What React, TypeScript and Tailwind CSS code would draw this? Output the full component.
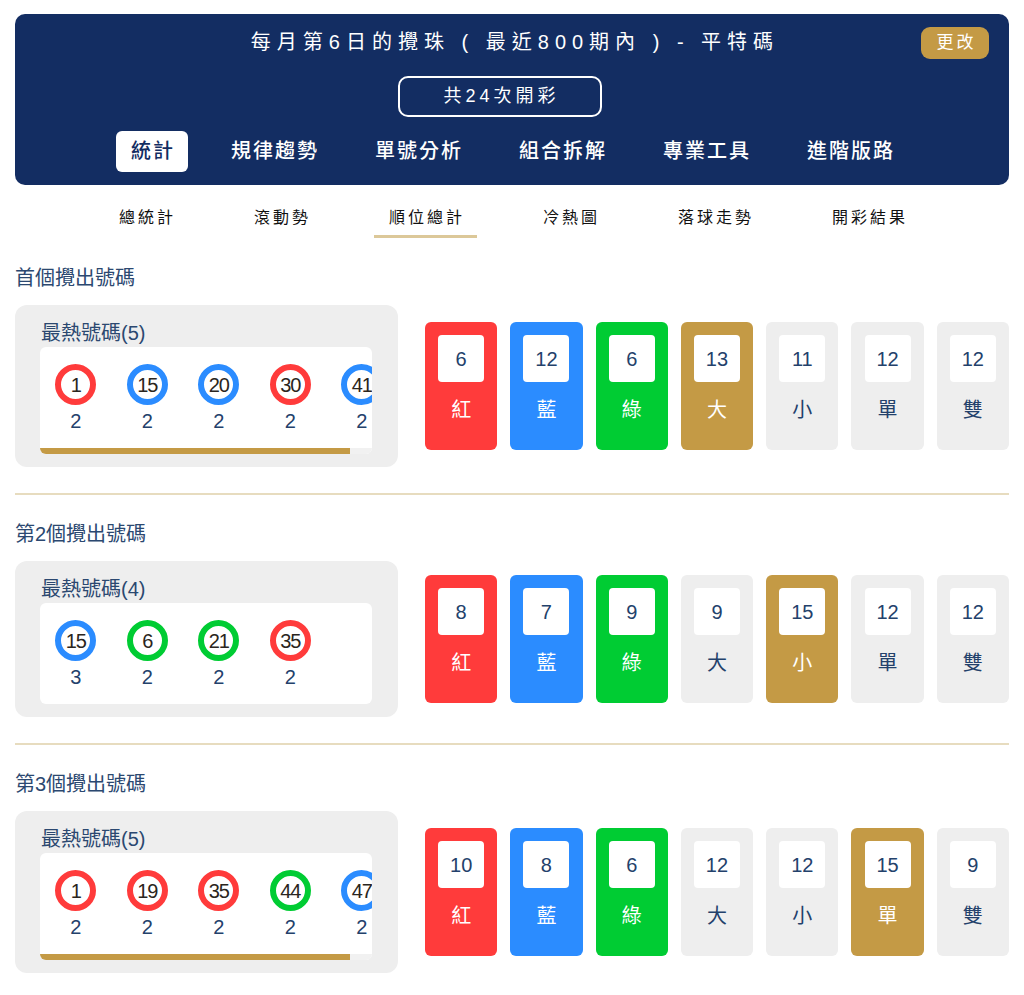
import React from "react";

type Ball = { n: number; c: "r" | "b" | "g"; k: number };
type Card = { v: number; label: string; t: "r" | "b" | "g" | "y" | "x" };

const ringCls: Record<string, string> = {
  r: "border-[#ff3b3b]",
  b: "border-[#2b8cff]",
  g: "border-[#00cc33]",
};
const cardCls: Record<string, string> = {
  r: "bg-[#ff3b3b] text-white",
  b: "bg-[#2b8cff] text-white",
  g: "bg-[#00cc33] text-white",
  y: "bg-[#c49a45] text-white",
  x: "bg-[#eeeeee] text-[#23416b]",
};

const sections: {
  title: string;
  hot: number;
  balls: Ball[];
  scroll: boolean;
  cards: Card[];
}[] = [
  {
    title: "首個攪出號碼",
    hot: 5,
    scroll: true,
    balls: [
      { n: 1, c: "r", k: 2 },
      { n: 15, c: "b", k: 2 },
      { n: 20, c: "b", k: 2 },
      { n: 30, c: "r", k: 2 },
      { n: 41, c: "b", k: 2 },
    ],
    cards: [
      { v: 6, label: "紅", t: "r" },
      { v: 12, label: "藍", t: "b" },
      { v: 6, label: "綠", t: "g" },
      { v: 13, label: "大", t: "y" },
      { v: 11, label: "小", t: "x" },
      { v: 12, label: "單", t: "x" },
      { v: 12, label: "雙", t: "x" },
    ],
  },
  {
    title: "第2個攪出號碼",
    hot: 4,
    scroll: false,
    balls: [
      { n: 15, c: "b", k: 3 },
      { n: 6, c: "g", k: 2 },
      { n: 21, c: "g", k: 2 },
      { n: 35, c: "r", k: 2 },
    ],
    cards: [
      { v: 8, label: "紅", t: "r" },
      { v: 7, label: "藍", t: "b" },
      { v: 9, label: "綠", t: "g" },
      { v: 9, label: "大", t: "x" },
      { v: 15, label: "小", t: "y" },
      { v: 12, label: "單", t: "x" },
      { v: 12, label: "雙", t: "x" },
    ],
  },
  {
    title: "第3個攪出號碼",
    hot: 5,
    scroll: true,
    balls: [
      { n: 1, c: "r", k: 2 },
      { n: 19, c: "r", k: 2 },
      { n: 35, c: "r", k: 2 },
      { n: 44, c: "g", k: 2 },
      { n: 47, c: "b", k: 2 },
    ],
    cards: [
      { v: 10, label: "紅", t: "r" },
      { v: 8, label: "藍", t: "b" },
      { v: 6, label: "綠", t: "g" },
      { v: 12, label: "大", t: "x" },
      { v: 12, label: "小", t: "x" },
      { v: 15, label: "單", t: "y" },
      { v: 9, label: "雙", t: "x" },
    ],
  },
];

const font = {
  fontFamily: '"Liberation Sans", "Noto Sans CJK TC", sans-serif',
};

export default function App() {
  const tabs = ["統計", "規律趨勢", "單號分析", "組合拆解", "專業工具", "進階版路"];
  const subs = ["總統計", "滾動勢", "順位總計", "冷熱圖", "落球走勢", "開彩結果"];
  return (
    <div className="bg-white w-[1024px] pt-[14px]" style={font}>
      {/* Header */}
      <div className="relative mx-[15px] h-[171px] rounded-[10px] bg-[#132d62] flex flex-col items-center pt-[14px]">
        <div className="h-[28px] leading-[28px] text-[20px] tracking-[6px] text-white font-normal pl-[6px]">
          每月第6日的攪珠 ( 最近800期內 ) - 平特碼
        </div>
        <button className="absolute right-[20px] top-[13px] w-[68px] h-[32px] rounded-[9px] bg-[#c49a45] text-white text-[17px] tracking-[3px] pl-[3px] leading-[32px]">
          更改
        </button>
        <div className="mt-[20px] mr-[25px] w-[204px] h-[41px] rounded-[10px] border-2 border-white flex items-center justify-center text-white text-[18px] tracking-[4px] pl-[4px] font-normal">
          共24次開彩
        </div>
        <div className="mt-[14px] flex gap-[28px]">
          {tabs.map((t, i) => (
            <div
              key={t}
              className={
                "h-[41px] leading-[41px] px-[13px] text-[20px] tracking-[2px] font-medium rounded-[6px] " +
                (i === 0 ? "bg-white text-[#132d62]" : "text-white")
              }
            >
              <span className="pl-[2px]">{t}</span>
            </div>
          ))}
        </div>
      </div>

      {/* Sub tabs */}
      <div className="mt-[21px] flex justify-center gap-[51px]">
        {subs.map((s, i) => (
          <div
            key={s}
            className={
              "px-[12px] pb-[5px] text-[16px] leading-[24px] tracking-[3px] text-[#111] font-normal border-b-[3px] " +
              (i === 2 ? "border-[#dcc899]" : "border-transparent")
            }
          >
            <span className="pl-[3px]">{s}</span>
          </div>
        ))}
      </div>

      {/* Sections */}
      <div className="px-[15px]">
        {sections.map((sec, si) => (
          <div
            key={sec.title}
            className={
              (si === 0 ? "pt-[26px] " : "pt-[25px] ") +
              "pb-[26px] " +
              (si < sections.length - 1 ? "border-b-[2px] border-[#e7dcbf]" : "")
            }
          >
            <div className="h-[28px] leading-[28px] text-[20px] text-[#2b4870]">
              {sec.title}
            </div>
            <div className="mt-[13px] flex items-center gap-[27px]">
              <div className="w-[383px] shrink-0 rounded-[12px] bg-[#eeeeee] pt-[14px] pb-[13px] px-[25px]">
                <div className="h-[28px] leading-[28px] text-[20px] text-[#2b4870] pl-[1px]">
                  最熱號碼({sec.hot})
                </div>
                <div className="w-[332px] bg-white rounded-[6px] overflow-hidden">
                  <div className="flex pt-[17px] pb-[16px]">
                    {sec.balls.map((b, bi) => (
                      <div
                        key={bi}
                        className="w-[71.5px] shrink-0 flex flex-col items-center"
                      >
                        <div
                          className={
                            "w-[41px] h-[41px] rounded-full border-[6px] bg-white flex items-center justify-center text-[20px] text-[#2a2520] tracking-[-1px] " +
                            ringCls[b.c]
                          }
                        >
                          {b.n}
                        </div>
                        <div className="mt-[5px] h-[22px] leading-[22px] text-[20px] text-[#23416b]">
                          {b.k}
                        </div>
                      </div>
                    ))}
                  </div>
                  {sec.scroll && (
                    <div className="h-[6px] bg-[#f1f1f1]">
                      <div className="h-[6px] w-[310px] bg-[#c49a45]" />
                    </div>
                  )}
                </div>
              </div>
              <div className="flex-1 flex gap-[13px]">
                {sec.cards.map((c, ci) => (
                  <div
                    key={ci}
                    className={
                      "flex-1 h-[128px] rounded-[6px] flex flex-col items-center pt-[13px] " +
                      cardCls[c.t]
                    }
                  >
                    <div className="w-[46px] h-[47px] rounded-[4px] bg-white flex items-center justify-center text-[20px] text-[#23416b]">
                      {c.v}
                    </div>
                    <div className="mt-[15px] h-[26px] leading-[26px] text-[20px]">
                      {c.label}
                    </div>
                  </div>
                ))}
              </div>
            </div>
          </div>
        ))}
      </div>
    </div>
  );
}
